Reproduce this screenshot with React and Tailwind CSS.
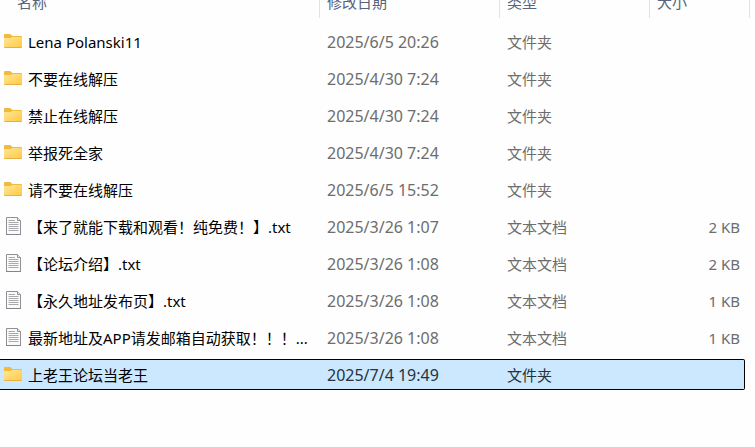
const files = [
  { name: 'Lena Polanski11', date: '2025/6/5 20:26', kind: 'folder' },
  { name: '不要在线解压', date: '2025/4/30 7:24', kind: 'folder' },
  { name: '禁止在线解压', date: '2025/4/30 7:24', kind: 'folder' },
  { name: '举报死全家', date: '2025/4/30 7:24', kind: 'folder' },
  { name: '请不要在线解压', date: '2025/6/5 15:52', kind: 'folder' },
  { name: '【来了就能下载和观看！纯免费！】.txt', date: '2025/3/26 1:07', kind: 'text', size: '2 KB' },
  { name: '【论坛介绍】.txt', date: '2025/3/26 1:08', kind: 'text', size: '2 KB' },
  { name: '【永久地址发布页】.txt', date: '2025/3/26 1:08', kind: 'text', size: '1 KB' },
  { name: '最新地址及APP请发邮箱自动获取！！！...', date: '2025/3/26 1:08', kind: 'text', size: '1 KB' },
  { name: '上老王论坛当老王', date: '2025/7/4 19:49', kind: 'folder', selected: true },
];

const kindLabels = { folder: '文件夹', text: '文本文档' };

function FolderIcon() {
  return (
    <svg className="w-[18px] h-[15px] shrink-0" viewBox="0 0 18 15" aria-hidden="true">
      <defs>
        <linearGradient id="folder-front" x1="0" y1="0" x2="1" y2="1">
          <stop offset="0" stopColor="#ffe59a" />
          <stop offset="1" stopColor="#ffca3e" />
        </linearGradient>
      </defs>
      <path d="M0 1Q0 0 1 0H5.8Q6.4 0 6.9.5L8.4 2H17Q18 2 18 3V8H0Z" fill="#f0bb3c" />
      <path d="M0 4H6Q6.8 4 7.4 3.4L8 3H17Q18 3 18 4V13Q18 14 17 14H1Q0 14 0 13Z" fill="url(#folder-front)" />
      <path d="M.4 13.5H17.6" stroke="#e5b04a" strokeWidth="1" />
    </svg>
  );
}

function TextFileIcon() {
  return (
    <svg className="w-[15px] h-[18px] shrink-0" viewBox="0 0 15 18" aria-hidden="true">
      <path d="M.5.5H11.5L14.5 3.5V17.5H.5Z" fill="#fafafa" stroke="#929096" />
      <path d="M11.5.5V3.5H14.5" fill="#e9e9ea" stroke="#929096" />
      <path d="M2.5 3.5H9M2.5 5.5H12.5M2.5 7.5H12.5M2.5 9.5H12.5M2.5 11.5H12.5M2.5 13.5H12.5" stroke="#aaa9ad" />
      <path d="M0 17.5H15" stroke="#86848a" />
    </svg>
  );
}

function HeaderCell({ children, className = 'pl-[7px]', colSpan }) {
  return (
    <th scope="col" colSpan={colSpan} className="h-[30px] p-0 text-left align-top font-normal">
      <div className={`flex h-7 items-start border-r border-[#e2e2e2] pt-[2px] ${className}`}>{children}</div>
    </th>
  );
}

function FileRow({ file }) {
  const box = file.selected ? 'border-y border-black bg-[#cce8ff]' : 'border-y border-transparent';
  const tone = file.selected ? 'text-[#26323c]' : 'text-[#6d6d6d]';

  return (
    <tr aria-selected={Boolean(file.selected)}>
      <td className={`h-[31px] p-0 pl-1 ${box}`}>
        <div className="flex items-center gap-[6px]">
          <span className="flex h-5 w-[18px] shrink-0 items-start justify-center">
            {file.kind === 'folder' ? (
              <span className="flex pt-[2px]">
                <FolderIcon />
              </span>
            ) : (
              <TextFileIcon />
            )}
          </span>
          <span className="truncate text-black">{file.name}</span>
        </div>
      </td>
      <td className={`p-0 pl-[7px] text-[16px] ${box} ${tone}`}>{file.date}</td>
      <td className={`p-0 pl-[7px] ${box} ${tone}`}>{kindLabels[file.kind]}</td>
      <td
        className={`p-0 pr-[5px] text-right ${box} ${tone} ${
          file.selected ? 'rounded-r-[2px] border-r' : ''
        }`}
      >
        {file.size}
      </td>
    </tr>
  );
}

export default function App() {
  return (
    <main className="min-h-screen overflow-hidden bg-[#fefefe] pr-[5px] font-['Noto_Sans','Noto_Sans_CJK_SC',sans-serif] text-[15px] leading-5">
      {/* The column header is partly scrolled out of view */}
      <table className="-mt-4 w-full table-fixed border-separate border-spacing-x-0 border-spacing-y-[6px]">
        <colgroup>
          <col />
          <col className="w-[180px]" />
          <col className="w-[150px]" />
          <col className="w-[95px]" />
          <col className="w-[5px]" />
        </colgroup>
        <thead className="text-[#56647c]">
          <tr>
            <HeaderCell className="pl-[17px]">名称</HeaderCell>
            <HeaderCell>修改日期</HeaderCell>
            <HeaderCell>类型</HeaderCell>
            <HeaderCell colSpan={2}>大小</HeaderCell>
          </tr>
        </thead>
        <tbody>
          {files.map((file) => (
            <FileRow key={file.name} file={file} />
          ))}
        </tbody>
      </table>
    </main>
  );
}
